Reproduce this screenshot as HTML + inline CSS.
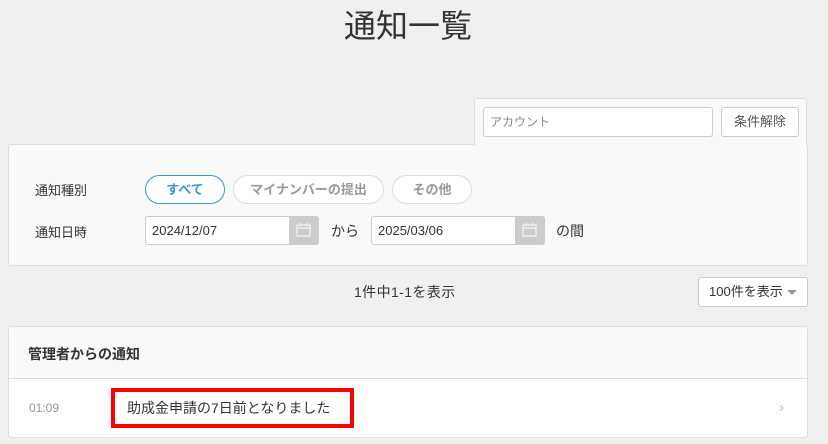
<!DOCTYPE html>
<html><head><meta charset="utf-8"><style>
*{box-sizing:border-box;margin:0;padding:0}
body{width:828px;height:444px;background:#f0f0f0;font-family:"Liberation Sans","Noto Sans CJK JP",sans-serif;position:relative;overflow:hidden;color:#333}
.a{position:absolute}
.title{left:0;width:816px;top:1px;text-align:center;font-size:32px;color:#333}
.tab{left:474px;top:98px;width:333px;height:48px;background:#f9f9f9;border:1px solid #ddd;border-bottom:none;border-radius:3px 3px 0 0;z-index:2}
.panel{left:8px;top:144px;width:800px;height:122px;background:#f9f9f9;border:1px solid #ddd;border-radius:3px}
.inp{background:#fff;border:1px solid #ccc;border-radius:3px;font-size:13px;padding-left:6px;line-height:27px}
.btn{background:#fff;border:1px solid #ccc;border-radius:3px;font-size:13px;text-align:center;line-height:27px;color:#555}
.lbl{font-size:13px;color:#333}
.pill{height:29px;border:1px solid #ddd;border-radius:15px;background:#fff;font-size:13px;font-weight:bold;color:#999;text-align:center;line-height:27px}
.cal{position:absolute;right:0;top:0;width:29px;height:27px;background:#ccc}
.card{left:8px;top:326px;width:800px;height:112px;background:#fff;border:1px solid #ddd;border-radius:3px;overflow:hidden}
</style></head><body>
<div class="a title">通知一覧</div>
<div class="a panel"></div>
<div class="a tab">
 <div class="a inp" style="left:8px;top:8px;width:230px;height:30px;color:#888;font-size:12px;line-height:29px">アカウント</div>
 <div class="a btn" style="left:246px;top:8px;width:78px;height:30px">条件解除</div>
</div>
<div class="a lbl" style="left:35px;top:180px">通知種別</div>
<div class="a pill" style="left:145px;top:175px;width:80px;border-color:#3b95d9;color:#3b95d9">すべて</div>
<div class="a pill" style="left:233px;top:175px;width:151px">マイナンバーの提出</div>
<div class="a pill" style="left:392px;top:175px;width:80px">その他</div>
<div class="a lbl" style="left:35px;top:222px">通知日時</div>
<div class="a inp" style="left:145px;top:216px;width:174px;height:29px">2024/12/07<div class="cal"><svg width="29" height="27"><rect x="8" y="8" width="13" height="11" fill="none" stroke="#eee" stroke-width="1.5"/><line x1="8" y1="11" x2="21" y2="11" stroke="#eee" stroke-width="1.5"/><line x1="11" y1="6" x2="11" y2="9" stroke="#eee" stroke-width="1.5"/><line x1="18" y1="6" x2="18" y2="9" stroke="#eee" stroke-width="1.5"/></svg></div></div>
<div class="a lbl" style="left:331px;top:221px;font-size:14px">から</div>
<div class="a inp" style="left:371px;top:216px;width:174px;height:29px">2025/03/06<div class="cal"><svg width="29" height="27"><rect x="8" y="8" width="13" height="11" fill="none" stroke="#eee" stroke-width="1.5"/><line x1="8" y1="11" x2="21" y2="11" stroke="#eee" stroke-width="1.5"/><line x1="11" y1="6" x2="11" y2="9" stroke="#eee" stroke-width="1.5"/><line x1="18" y1="6" x2="18" y2="9" stroke="#eee" stroke-width="1.5"/></svg></div></div>
<div class="a lbl" style="left:556px;top:221px;font-size:14px">の間</div>
<div class="a" style="left:354px;top:282px;font-size:14px;letter-spacing:0.4px">1件中1-1を表示</div>
<div class="a btn" style="left:698px;top:277px;width:110px;height:30px;text-align:left;padding-left:10px;color:#333">100件を表示<span style="position:absolute;right:10px;top:12px;border:5px solid transparent;border-top:5px solid #999;border-bottom:none"></span></div>
<div class="a card">
 <div style="height:52px;background:#f9f9f9;border-bottom:1px solid #ddd;font-size:14px;font-weight:bold;padding:17px 0 0 19px;color:#333">管理者からの通知</div>
 <div class="a" style="left:20px;top:74px;font-size:12px;color:#999">01:09</div>
 <div class="a" style="left:102px;top:61px;width:243px;height:40px;border:4px solid #f00;font-size:14px;padding:6px 0 0 12px">助成金申請の7日前となりました</div>
 <div class="a" style="left:770px;top:72px;color:#bbb;font-size:15px">›</div>
</div>
</body></html>
